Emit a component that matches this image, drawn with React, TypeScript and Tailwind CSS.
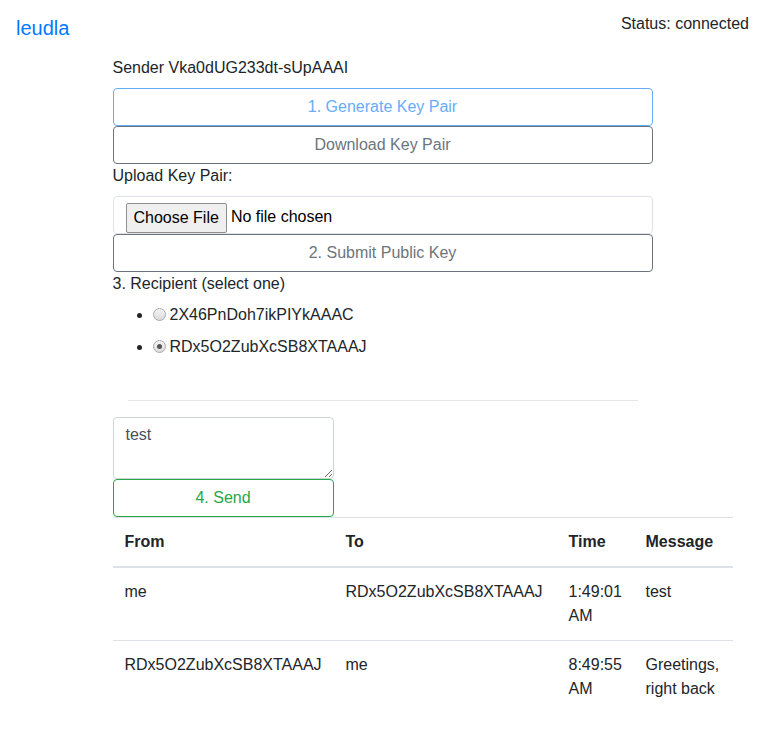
import React from 'react';

const recipients = [
  { id: '2X46PnDoh7ikPIYkAAAC', checked: false },
  { id: 'RDx5O2ZubXcSB8XTAAAJ', checked: true },
];

const messages = [
  { from: 'me', to: 'RDx5O2ZubXcSB8XTAAAJ', time: '1:49:01 AM', text: 'test' },
  { from: 'RDx5O2ZubXcSB8XTAAAJ', to: 'me', time: '8:49:55 AM', text: 'Greetings, right back' },
];

function Radio({ checked }: { checked: boolean }) {
  return (
    <span className="inline-flex w-[13px] h-[13px] rounded-full border border-[#a9a9a9] bg-gradient-to-b from-[#f4f4f4] to-[#dcdcdc] items-center justify-center mr-[4px] translate-y-[-1px]">
      {checked && <span className="w-[5px] h-[5px] rounded-full bg-[#555]" />}
    </span>
  );
}

export default function App() {
  return (
    <div className="min-h-screen bg-white text-[#212529] font-['Liberation_Sans',Arial,sans-serif] text-base leading-6">
      {/* header */}
      <div className="flex justify-between px-4">
        <a className="text-[#007bff] text-xl leading-[30px] py-[5px] mt-2">leudla</a>
        <span className="pt-[12px]">Status: connected</span>
      </div>

      <div className="w-[540px] mx-auto mt-[8px]">
        <p>Sender Vka0dUG233dt-sUpAAAI</p>

        <div className="mt-2">
          <button className="w-full h-[38px] border border-[#66adf9] rounded-[4px] text-[#66adf9]">1. Generate Key Pair</button>
          <button className="w-full h-[38px] border border-[#6c757d] rounded-[4px] text-[#6c757d]">Download Key Pair</button>
        </div>

        <label className="block">Upload Key Pair:</label>
        <div className="mt-2 h-[38px] border border-[#dfe3e7] rounded-[4px] flex items-center pl-3">
          <span className="h-[30px] px-[7px] mt-[5px] border border-[#8f8f8f] rounded-[2px] bg-[#efefef] text-black flex items-center">Choose File</span>
          <span className="ml-[4px] mt-[3px] text-black">No file chosen</span>
        </div>
        <button className="w-full h-[38px] border border-[#6c757d] rounded-[4px] text-[#6c757d]">2. Submit Public Key</button>

        <p>3. Recipient (select one)</p>
        <ul className="list-disc pl-[40px] mt-[7px]">
          {recipients.map((r) => (
            <li key={r.id} className="mb-2 h-6">
              <label className="inline-flex items-center h-6 align-top">
                <Radio checked={r.checked} />
                {r.id}
              </label>
            </li>
          ))}
        </ul>

        <div className="px-[15px]">
          <hr className="mt-[41px] border-t border-[#e5e5e5]" />
        </div>

        <div className="w-[221px] mt-4">
          <textarea
            className="block w-full h-[62px] border border-[#ced4da] rounded-[4px] px-3 py-[5px] text-[#495057] outline-none"
            defaultValue="test"
          />
          <button className="w-full h-[38px] border border-[#28a745] rounded-[4px] text-[#28a745]">4. Send</button>
        </div>

        <table className="w-[620px] border-collapse table-fixed text-left">
          <colgroup>
            <col className="w-[221px]" />
            <col className="w-[223px]" />
            <col className="w-[77px]" />
            <col className="w-[99px]" />
          </colgroup>
          <thead>
            <tr className="border-t border-[#dee2e6]">
              <th className="p-3 font-bold border-b-2 border-[#dee2e6]">From</th>
              <th className="p-3 font-bold border-b-2 border-[#dee2e6]">To</th>
              <th className="p-3 font-bold border-b-2 border-[#dee2e6]">Time</th>
              <th className="p-3 font-bold border-b-2 border-[#dee2e6]">Message</th>
            </tr>
          </thead>
          <tbody>
            {messages.map((m, i) => (
              <tr key={i} className="border-t border-[#dee2e6] align-top">
                <td className="p-3">{m.from}</td>
                <td className="p-3">{m.to}</td>
                <td className="p-3">{m.time}</td>
                <td className="p-3">{m.text}</td>
              </tr>
            ))}
          </tbody>
        </table>
      </div>
    </div>
  );
}
